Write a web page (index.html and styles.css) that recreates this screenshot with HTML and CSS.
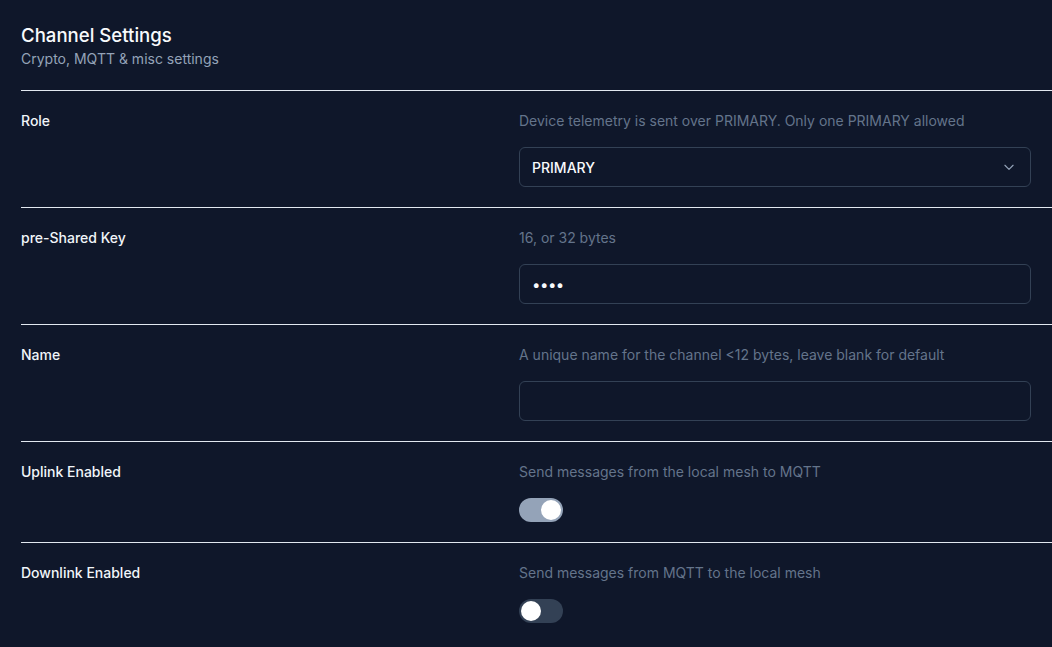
FILE: index.html
```html
<!DOCTYPE html>
<html lang="en">
<head>
<meta charset="utf-8">
<title>Channel Settings</title>
<link rel="stylesheet" href="styles.css">
</head>
<body>
<div class="page">
  <header class="header">
    <h1 class="title">Channel Settings</h1>
    <p class="subtitle">Crypto, MQTT &amp; misc settings</p>
  </header>

  <div class="row">
    <div class="label">Role</div>
    <div class="control">
      <div class="desc">Device telemetry is sent over PRIMARY. Only one PRIMARY allowed</div>
      <div class="field select">
        <span>PRIMARY</span>
        <svg class="chev" width="14" height="14" viewBox="0 0 24 24" fill="none" stroke="currentColor" stroke-width="2" stroke-linecap="round" stroke-linejoin="round"><path d="M5 9l7 7 7-7"/></svg>
      </div>
    </div>
  </div>

  <div class="row">
    <div class="label">pre-Shared Key</div>
    <div class="control">
      <div class="desc">16, or 32 bytes</div>
      <div class="field"><span class="dots">••••</span></div>
    </div>
  </div>

  <div class="row">
    <div class="label">Name</div>
    <div class="control">
      <div class="desc">A unique name for the channel &lt;12 bytes, leave blank for default</div>
      <div class="field"></div>
    </div>
  </div>

  <div class="row">
    <div class="label">Uplink Enabled</div>
    <div class="control">
      <div class="desc">Send messages from the local mesh to MQTT</div>
      <div class="toggle on"><span class="knob"></span></div>
    </div>
  </div>

  <div class="row">
    <div class="label">Downlink Enabled</div>
    <div class="control">
      <div class="desc">Send messages from MQTT to the local mesh</div>
      <div class="toggle"><span class="knob"></span></div>
    </div>
  </div>
</div>
</body>
</html>
```

FILE: styles.css
```css
* { box-sizing: border-box; }
html, body {
  margin: 0;
  padding: 0;
  background: #0f172a;
  font-family: Inter, "Noto Sans", sans-serif;
  color: #f1f5f9;
}
.page {
  padding-left: 21px;
}
.header {
  padding: 21px 0 21px 0;
}
.title {
  margin: 0;
  font-size: 18.6px;
  line-height: 28px;
  font-weight: 500;
  color: #f8fafc;
}
.subtitle {
  margin: 0;
  font-size: 14px;
  line-height: 20px;
  color: #94a3b8;
}
.row {
  display: flex;
  border-top: 1px solid #e2e8f0;
  padding: 20px 21px 20px 0;
}
.label {
  width: 498px;
  flex: none;
  font-size: 14px;
  line-height: 20px;
  font-weight: 500;
  color: #f1f5f9;
}
.control {
  flex: 1;
  display: flex;
  flex-direction: column;
  gap: 16px;
}
.desc {
  font-size: 14px;
  line-height: 20px;
  color: #64748b;
}
.field {
  height: 40px;
  border: 1px solid #334155;
  border-radius: 6px;
  background: #0f172a;
  display: flex;
  align-items: center;
  padding: 0 12px;
  font-size: 14px;
  color: #f8fafc;
}
.select {
  justify-content: space-between;
  font-weight: 500;
}
.chev {
  color: #94a3b8;
  margin-right: 2px;
}
.dots {
  font-size: 15px;
  letter-spacing: -0.5px;
}
.toggle {
  width: 44px;
  height: 24px;
  border-radius: 12px;
  background: #334155;
  display: flex;
  align-items: center;
  padding: 2px;
}
.toggle.on {
  background: #94a3b8;
  justify-content: flex-end;
}
.knob {
  width: 20px;
  height: 20px;
  border-radius: 50%;
  background: #ffffff;
}
```
